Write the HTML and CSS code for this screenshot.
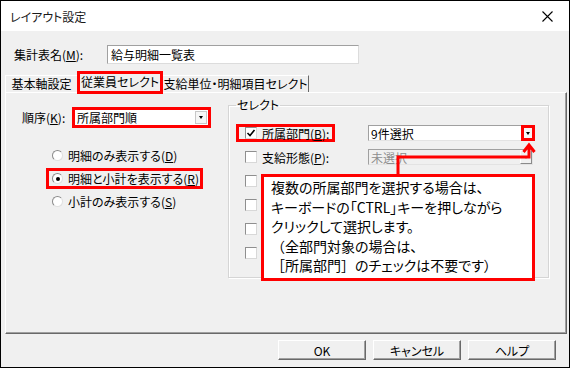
FILE: index.html
```html
<!DOCTYPE html>
<html lang="ja">
<head>
<meta charset="utf-8">
<title>レイアウト設定</title>
<link rel="stylesheet" href="styles.css">
</head>
<body>
<div class="window">
  <div class="titlebar">
    <span class="title">レイアウト設定</span>
    <svg class="close" viewBox="0 0 11 11" width="11" height="11"><path d="M0.5 0.5 L10.5 10.5 M10.5 0.5 L0.5 10.5" stroke="#000" stroke-width="1.1" fill="none"/></svg>
  </div>
  <div class="content">
    <div class="name-row">
      <label class="name-label">集計表名(<u>M</u>):</label>
      <div class="textbox">給与明細一覧表</div>
    </div>
    <div class="tabs">
      <div class="tab tab-first">基本軸設定</div>
      <div class="tab tab-active">従業員セレクト</div>
      <div class="tab tab-last">支給単位・明細項目セレクト</div>
    </div>
    <div class="panel">
      <div class="left-col">
        <div class="order-row">
          <label class="order-label">順序(<u>K</u>):</label>
          <div class="combo hl-combo">
            <span class="combo-text">所属部門順</span>
            <span class="ddbtn"><i class="tri"></i></span>
          </div>
        </div>
        <div class="radios">
          <div class="radio-row"><span class="radio"></span><span>明細のみ表示する(<u>D</u>)</span></div>
          <div class="radio-row hl"><span class="radio on"></span><span>明細と小計を表示する(<u>R</u>)</span></div>
          <div class="radio-row"><span class="radio"></span><span>小計のみ表示する(<u>S</u>)</span></div>
        </div>
      </div>
      <fieldset class="group">
        <legend>セレクト</legend>
        <div class="g-row">
          <div class="chk-label hl"><span class="chk on"><svg viewBox="0 0 10 10" width="10" height="10"><path d="M1.5 5 L4 7.5 L8.5 2" stroke="#000" stroke-width="1.6" fill="none"/></svg></span><span>所属部門(<u>B</u>):</span></div>
          <div class="gcombo">
            <span class="combo-text">9件選択</span>
            <span class="ddbtn-hl"><i class="tri"></i></span>
          </div>
        </div>
        <div class="g-row">
          <div class="chk-label"><span class="chk"></span><span>支給形態(<u>P</u>):</span></div>
          <div class="gcombo disabled">
            <span class="combo-text">未選択</span>
            <span class="ddbtn"><i class="tri grey"></i></span>
          </div>
        </div>
        <div class="g-row"><div class="chk-label"><span class="chk"></span></div></div>
        <div class="g-row"><div class="chk-label"><span class="chk"></span></div></div>
        <div class="g-row"><div class="chk-label"><span class="chk"></span></div></div>
        <div class="g-row"><div class="chk-label"><span class="chk"></span></div></div>
      </fieldset>
      <svg class="arrow" viewBox="0 0 150 40" width="150" height="40">
        <polyline points="8,40 8,19 139,19 139,7" fill="none" stroke="#f00" stroke-width="3" stroke-linejoin="miter"/>
        <polyline points="133.5,14 139,7 144.5,14" fill="none" stroke="#f00" stroke-width="3" stroke-linejoin="miter"/>
      </svg>
      <div class="callout">
        <p>複数の所属部門を選択する場合は、</p>
        <p>キーボードの「CTRL」キーを押しながら</p>
        <p>クリックして選択します。</p>
        <p><span class="fw">（</span>全部門対象の場合は、</p>
        <p><span class="fw">［</span>所属部門<span class="fw">］</span>のチェックは不要です）</p>
      </div>
    </div>
    <div class="buttons">
      <button class="btn">OK</button>
      <button class="btn">キャンセル</button>
      <button class="btn">ヘルプ</button>
    </div>
  </div>
</div>
</body>
</html>
```
FILE: styles.css
```css
* { box-sizing: border-box; }
html, body { margin: 0; padding: 0; }
body {
  width: 570px;
  height: 368px;
  background: #fff;
  font-family: "Noto Sans CJK JP", "Noto Sans", sans-serif;
  font-size: 12px;
  line-height: 15px;
  color: #000;
  font-feature-settings: "palt" 1;
}
u { text-decoration: underline; text-underline-offset: 1px; }

.window {
  width: 570px;
  height: 368px;
  border: 1px solid #000;
  background: #f0f0f0;
  display: flex;
  flex-direction: column;
}
.titlebar {
  height: 30px;
  flex: none;
  background: #fff;
  display: flex;
  align-items: center;
  justify-content: space-between;
  padding: 0 16px 0 9px;
  color: #1a1a1a;
}
.close { display: block; }

.content {
  flex: 1;
  padding: 14px 2px 0 4px;
  display: flex;
  flex-direction: column;
}

.name-row {
  display: flex;
  align-items: center;
  height: 19px;
  padding-left: 9px;
}
.name-label { width: 93px; }
.textbox {
  width: 252px;
  height: 19px;
  background: #fff;
  border: 1px solid #a0a0a0;
  border-right-color: #dcdcdc;
  border-bottom-color: #dcdcdc;
  padding-left: 3px;
  line-height: 17px;
}

.tabs {
  display: flex;
  align-items: flex-end;
  height: 21px;
  margin-top: 7px;
}
.tab {
  height: 17px;
  line-height: 16px;
  text-align: center;
  border-top: 1px solid #fff;
  border-left: 1px solid #fff;
}
.tab-first { width: 72px; }
.tab-active {
  position: relative;
  z-index: 1;
  width: 86px;
  height: 23px;
  margin-bottom: -2px;
  border: 3px solid #f00;
  background: #f0f0f0;
  line-height: 16px;
}
.tab-last {
  width: 146px;
  border-left: none;
  border-right: 1px solid #696969;
}

.panel {
  position: relative;
  height: 242px;
  border-top: 1px solid #fff;
  border-left: 1px solid #fff;
  border-right: 1px solid #696969;
  border-bottom: 1px solid #696969;
  box-shadow: inset -1px -1px 0 #a0a0a0;
  display: flex;
  align-items: flex-start;
}

.left-col {
  width: 222px;
  flex: none;
  padding-top: 14px;
}
.order-row {
  display: flex;
  align-items: center;
  height: 21px;
  padding-left: 16px;
}
.order-label { width: 50px; }
.combo {
  display: flex;
  align-items: center;
  background: #fff;
}
.hl-combo {
  width: 139px;
  height: 21px;
  border: 3px solid #f00;
  padding-left: 2px;
}
.combo-text { flex: 1; white-space: nowrap; overflow: hidden; }
.ddbtn {
  width: 12px;
  height: 13px;
  margin-right: 1px;
  border: 1px solid #c8c8c8;
  background: #f6f6f6;
  display: flex;
  align-items: center;
  justify-content: center;
}
.tri {
  display: block;
  width: 0;
  height: 0;
  border-left: 2.5px solid transparent;
  border-right: 2.5px solid transparent;
  border-top: 3px solid #000;
}
.tri.grey { border-top-color: #9a9a9a; }

.radios {
  margin-top: 17px;
  margin-left: 40px;
}
.radio-row {
  display: flex;
  align-items: center;
  gap: 5px;
  width: fit-content;
  height: 21px;
  margin-bottom: 2px;
  border: 3px solid transparent;
  padding: 0 1px 0 3px;
  white-space: nowrap;
}
.hl { border-color: #f00; }
.radio {
  width: 11px;
  height: 11px;
  border-radius: 50%;
  border: 1px solid;
  border-color: #8a8a8a #e0e0e0 #e0e0e0 #8a8a8a;
  background: #fff;
  display: flex;
  align-items: center;
  justify-content: center;
}
.radio.on::after {
  content: "";
  width: 4px;
  height: 4px;
  border-radius: 50%;
  background: #000;
}

.group {
  width: 321px;
  flex: none;
  margin: 4px 0 0 0;
  padding: 8px 13px 12px 7px;
  border: 1px solid #d5d5d5;
  box-shadow: 1px 1px 0 #fff, inset 1px 1px 0 #fff;
  min-width: 0;
}
.group legend {
  padding: 0 1px;
  line-height: 16px;
}
.g-row {
  display: flex;
  align-items: center;
  height: 24px;
}
.chk-label {
  display: flex;
  align-items: center;
  gap: 5px;
  height: 18px;
  border: 3px solid transparent;
  padding: 0 3px 0 6px;
  white-space: nowrap;
}
.chk-label.hl { border-color: #f00; }
.chk {
  width: 12px;
  height: 12px;
  border: 1px solid #8f8f8f;
  border-right-color: #d8d8d8;
  border-bottom-color: #d8d8d8;
  background: #fff;
  display: flex;
  align-items: center;
  justify-content: center;
}
.chk svg { display: block; }
.gcombo {
  margin-left: auto;
  width: 167px;
  height: 16px;
  display: flex;
  align-items: center;
  background: #fff;
  border: 1px solid #a0a0a0;
  border-right-color: #e3e3e3;
  border-bottom-color: #e3e3e3;
  padding-left: 2px;
}
.gcombo.disabled {
  background: #f0f0f0;
  color: #8d8d8d;
  width: 165px;
  margin-right: 2px;
}
.gcombo.disabled .ddbtn { height: 14px; margin-right: 0; border-color: #fff #8a8a8a #8a8a8a #fff; background: #f0f0f0; }
.ddbtn-hl {
  width: 14px;
  height: 16px;
  margin-right: -1px;
  border: 3px solid #f00;
  background: #f6f6f6;
  display: flex;
  align-items: center;
  justify-content: center;
}

.arrow {
  position: absolute;
  left: 384px;
  top: 45px;
  overflow: visible;
}
.callout {
  position: absolute;
  left: 255px;
  top: 81px;
  width: 274px;
  height: 107px;
  border: 3px solid #f00;
  background: #fff;
  padding: 1px 0 0 7px;
  font-size: 14px;
  line-height: 19.5px;
  color: #000;
}
.callout p { margin: 0; white-space: nowrap; }
.fw { font-feature-settings: "palt" 0; }

.buttons {
  display: flex;
  justify-content: flex-end;
  gap: 7px;
  margin-top: 6px;
  padding-right: 11px;
}
.btn {
  width: 88px;
  height: 20px;
  padding: 0;
  font: inherit;
  color: #000;
  background: #f0f0f0;
  border: 1px solid;
  border-color: #fff #696969 #696969 #fff;
  box-shadow: inset -1px -1px 0 #a0a0a0;
  line-height: 17px;
}
```
